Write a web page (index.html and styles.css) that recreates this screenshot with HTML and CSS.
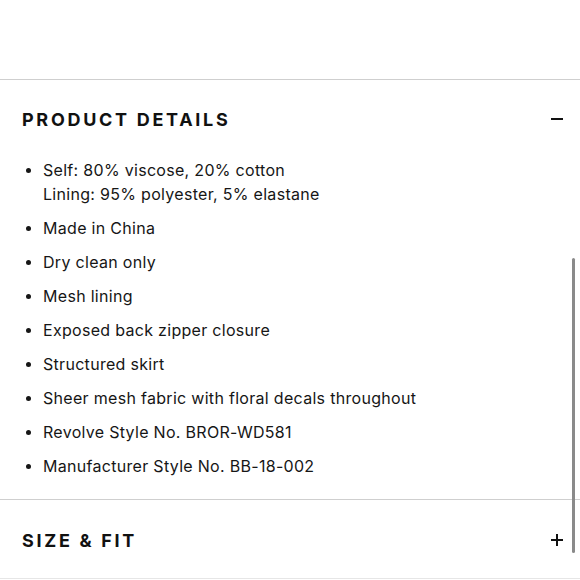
FILE: index.html
```html
<!DOCTYPE html>
<html>
<head>
<meta charset="utf-8">
<link rel="stylesheet" href="styles.css">
</head>
<body>
<div class="page">
  <div class="spacer"></div>
  <section class="acc">
    <div class="acc-head">
      <h2 class="acc-title">PRODUCT DETAILS</h2>
      <span class="minus"></span>
    </div>
    <ul class="details">
      <li>Self: 80% viscose, 20% cotton<br>Lining: 95% polyester, 5% elastane</li>
      <li>Made in China</li>
      <li>Dry clean only</li>
      <li>Mesh lining</li>
      <li>Exposed back zipper closure</li>
      <li>Structured skirt</li>
      <li>Sheer mesh fabric with floral decals throughout</li>
      <li>Revolve Style No. BROR-WD581</li>
      <li>Manufacturer Style No. BB-18-002</li>
    </ul>
  </section>
  <section class="acc">
    <div class="acc-head">
      <h2 class="acc-title">SIZE &amp; FIT</h2>
      <span class="plus"></span>
    </div>
  </section>
  <div class="scrollbar"></div>
</div>
</body>
</html>
```
FILE: styles.css
```css
html, body {
  margin: 0;
  padding: 0;
  background: #fff;
}
.page {
  position: relative;
  width: 580px;
  height: 580px;
  overflow: hidden;
  font-family: Inter, "Noto Sans", sans-serif;
  color: #1a1a1a;
}
.spacer {
  height: 79px;
}
.acc {
  border-top: 1px solid #cfcfcf;
}
.acc:last-of-type {
  border-bottom: 1px solid #e6e6e6;
}
.acc-head {
  height: 78px;
  display: flex;
  align-items: center;
  justify-content: space-between;
  padding: 0 17px 0 22px;
}
.acc-head + .details {
  margin-top: 0;
}
.acc:last-of-type .acc-head {
  padding-top: 2px;
  height: 76px;
}
.acc-title {
  margin: 0;
  font-size: 18px;
  font-weight: 700;
  letter-spacing: 2.7px;
  color: #111;
}
.minus, .plus {
  position: relative;
  width: 12px;
  height: 12px;
}
.minus::before, .plus::before, .plus::after {
  content: "";
  position: absolute;
  background: #111;
}
.minus::before, .plus::before {
  left: 0;
  top: 5px;
  width: 12px;
  height: 2px;
}
.plus::after {
  left: 5px;
  top: 0;
  width: 2px;
  height: 12px;
}
.details {
  list-style: none;
  margin: 0;
  padding: 0 0 21px 43px;
  font-size: 16px;
  line-height: 24px;
  letter-spacing: 0.3px;
  color: #161616;
}
.details li {
  position: relative;
  margin-bottom: 10px;
}
.details li:last-child {
  margin-bottom: 0;
}
.details li::before {
  content: "";
  position: absolute;
  left: -17px;
  top: 10px;
  width: 5px;
  height: 5px;
  border-radius: 50%;
  background: #161616;
}
.scrollbar {
  position: absolute;
  right: 5px;
  top: 258px;
  width: 3px;
  height: 295px;
  border-radius: 2px;
  background: #8a8a8a;
}
```
